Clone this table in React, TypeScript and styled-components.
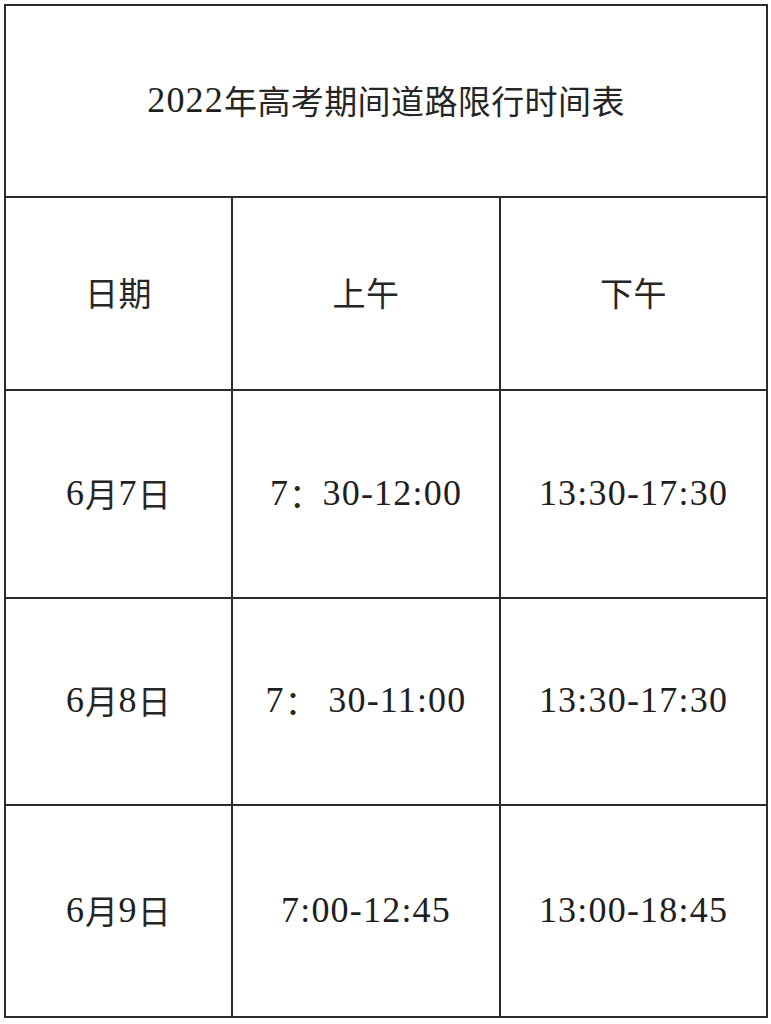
import React from 'react';
import styled, { createGlobalStyle } from 'styled-components';

const GlobalStyle = createGlobalStyle`
  html, body {
    margin: 0;
    padding: 0;
    background: #ffffff;
  }
`;

const rows = [
  { date: '日期', am: '上午', pm: '下午', height: 191 },
  { date: '6月7日', am: '7：30-12:00', pm: '13:30-17:30', height: 206 },
  { date: '6月8日', am: '7：\u00a030-11:00', pm: '13:30-17:30', height: 205 },
  { date: '6月9日', am: '7:00-12:45', pm: '13:00-18:45', height: 210 },
];

// CJK runs get their own (slightly smaller) span, latin digits stay in the serif
const hanRe = /([\u3000-\u9fff\uff00-\uffef]+)/;
const withHan = (text: string) =>
  text
    .split(hanRe)
    .filter(Boolean)
    .map((part, i) => (hanRe.test(part) ? <Han key={i}>{part}</Han> : part));

const App = () => {
  return (
    <Page>
      <GlobalStyle />
      <Table>
        <TitleCell>{withHan('2022年高考期间道路限行时间表')}</TitleCell>
        {rows.map((row, i) => (
          <React.Fragment key={i}>
            <Cell h={row.height}>{withHan(row.date)}</Cell>
            <Cell h={row.height}>{withHan(row.am)}</Cell>
            <Cell h={row.height}>{withHan(row.pm)}</Cell>
          </React.Fragment>
        ))}
      </Table>
    </Page>
  );
};

const Page = styled.div`
  width: 771px;
  height: 1024px;
  padding: 4px 0 0 4px;
  box-sizing: border-box;
  background: #ffffff;
`;

const Table = styled.div`
  display: grid;
  grid-template-columns: 225px 266px 265px;
  gap: 2px;
  width: fit-content;
  border: 2px solid #2b2b2b;
  background: #2b2b2b;
  font-family: 'Liberation Serif', 'Noto Sans CJK SC', serif;
  font-size: 36px;
  letter-spacing: 1.2px;
  color: #1e1e1e;
`;

const Han = styled.span`
  font-family: 'Noto Sans CJK SC', sans-serif;
  font-size: 33px;
  letter-spacing: 0.4px;
  color: #262626;
`;

interface CellProps {
  h: number;
}

const Cell = styled.div<CellProps>`
  height: ${({ h }) => h}px;
  box-sizing: border-box;
  padding-bottom: 3px;
  display: flex;
  align-items: center;
  justify-content: center;
  background: #ffffff;
  white-space: pre;
`;

const TitleCell = styled.div`
  grid-column: 1 / -1;
  height: 190px;
  box-sizing: border-box;
  padding-bottom: 3px;
  display: flex;
  align-items: center;
  justify-content: center;
  background: #ffffff;
  white-space: pre;
`;

export default App;
